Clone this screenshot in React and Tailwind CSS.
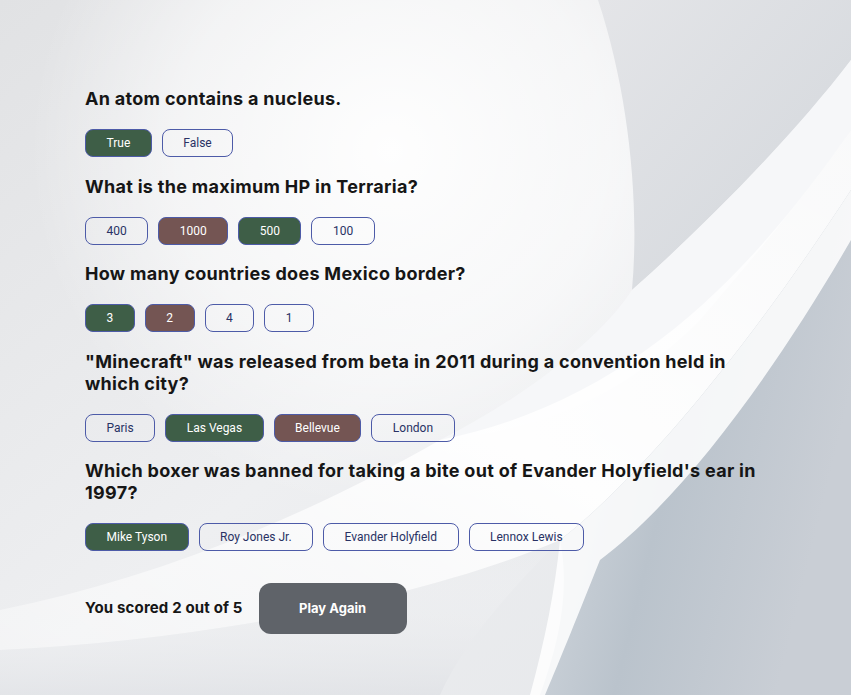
import React from 'react';

const QUESTIONS = [
  {
    q: 'An atom contains a nucleus.',
    answers: [
      { text: 'True', state: 'correct' },
      { text: 'False' },
    ],
  },
  {
    q: 'What is the maximum HP in Terraria?',
    answers: [
      { text: '400' },
      { text: '1000', state: 'wrong' },
      { text: '500', state: 'correct' },
      { text: '100' },
    ],
  },
  {
    q: 'How many countries does Mexico border?',
    answers: [
      { text: '3', state: 'correct' },
      { text: '2', state: 'wrong' },
      { text: '4' },
      { text: '1' },
    ],
  },
  {
    q: '"Minecraft" was released from beta in 2011 during a convention held in which city?',
    answers: [
      { text: 'Paris' },
      { text: 'Las Vegas', state: 'correct' },
      { text: 'Bellevue', state: 'wrong' },
      { text: 'London' },
    ],
  },
  {
    q: "Which boxer was banned for taking a bite out of Evander Holyfield's ear in 1997?",
    answers: [
      { text: 'Mike Tyson', state: 'correct' },
      { text: 'Roy Jones Jr.' },
      { text: 'Evander Holyfield' },
      { text: 'Lennox Lewis' },
    ],
  },
];

function Backdrop() {
  return (
    <svg className="absolute inset-0 h-full w-full" viewBox="0 0 851 695" preserveAspectRatio="none">
      <defs>
        <linearGradient id="base" x1="0" y1="0" x2="1" y2="1">
          <stop offset="0" stopColor="#e1e2e4" />
          <stop offset="0.5" stopColor="#eeeff1" />
          <stop offset="1" stopColor="#e4e6e9" />
        </linearGradient>
        <radialGradient id="glow" cx="390" cy="150" r="360" gradientUnits="userSpaceOnUse">
          <stop offset="0" stopColor="#ffffff" stopOpacity="0.95" />
          <stop offset="0.6" stopColor="#ffffff" stopOpacity="0.55" />
          <stop offset="1" stopColor="#ffffff" stopOpacity="0" />
        </radialGradient>
        <linearGradient id="topRight" x1="0" y1="0" x2="1" y2="1">
          <stop offset="0" stopColor="#e4e5e8" />
          <stop offset="1" stopColor="#d2d6db" />
        </linearGradient>
        <linearGradient id="streak" x1="0" y1="1" x2="1" y2="0">
          <stop offset="0" stopColor="#ffffff" stopOpacity="0.35" />
          <stop offset="0.5" stopColor="#ffffff" stopOpacity="0.95" />
          <stop offset="1" stopColor="#ffffff" stopOpacity="0.7" />
        </linearGradient>
        <linearGradient id="bottomRight" x1="0" y1="0" x2="1" y2="0.4">
          <stop offset="0" stopColor="#dde1e6" />
          <stop offset="0.55" stopColor="#bac3cc" />
          <stop offset="1" stopColor="#c9ced5" />
        </linearGradient>
        <linearGradient id="bottomLeft" x1="0" y1="0" x2="0" y2="1">
          <stop offset="0" stopColor="#ffffff" stopOpacity="0" />
          <stop offset="1" stopColor="#dfe1e5" stopOpacity="0.7" />
        </linearGradient>
      </defs>
      <rect width="851" height="695" fill="url(#base)" />
      <circle cx="390" cy="150" r="360" fill="url(#glow)" />
      <path d="M598 0 C628 90 640 200 632 290 C700 230 790 140 851 60 L851 0 Z" fill="url(#topRight)" />
      <path d="M632 290 C600 340 520 400 440 440 C560 430 640 380 700 320 C760 250 810 190 851 130 L851 60 C790 140 700 230 632 290 Z" fill="#f6f7f9" />
      <path d="M440 440 C300 520 150 580 0 610 L0 650 C200 640 420 600 560 540 C650 500 720 430 790 330 L851 190 L851 130 C760 260 640 400 440 440 Z" fill="url(#streak)" />
      <path d="M0 650 C200 640 420 600 560 540 C500 600 460 650 440 695 L0 695 Z" fill="url(#bottomLeft)" />
      <path d="M560 540 C650 470 760 330 851 190 L851 695 L540 695 C560 640 570 590 560 540 Z" fill="url(#bottomRight)" />
      <path d="M560 540 C650 470 760 330 851 190 L851 240 C770 380 680 500 600 560 C580 610 560 660 545 695 L530 695 C545 640 555 590 560 540 Z" fill="#ffffff" opacity="0.85" />
    </svg>
  );
}

function Answer({ text, state }) {
  const look =
    state === 'correct'
      ? 'bg-[#3e5e47] text-white'
      : state === 'wrong'
      ? 'bg-[#745553] text-white'
      : 'bg-transparent text-[#293264]';
  return (
    <button
      className={`h-[28px] rounded-[8px] border border-[#4d5ba8] px-[20.5px] text-[12px] ${look}`}
      style={{ fontFamily: 'Roboto, "Noto Sans", sans-serif' }}
    >
      {text}
    </button>
  );
}

export default function App() {
  return (
    <div className="relative min-h-[695px] w-full overflow-hidden">
      <Backdrop />
      <main
        className="relative mx-auto w-[681px] pt-[88px] text-[#161616]"
        style={{ fontFamily: 'Inter, "Liberation Sans", sans-serif' }}
      >
        {QUESTIONS.map((item) => (
          <section key={item.q} className="mb-[18.5px]">
            <h2 className="mb-[19px] text-[18px] font-bold leading-[22px] tracking-[0.3px]">{item.q}</h2>
            <div className="flex gap-[10px]">
              {item.answers.map((a) => (
                <Answer key={a.text} {...a} />
              ))}
            </div>
          </section>
        ))}
        <div className="mt-[32px] flex items-center gap-[16px]">
          <p className="text-[15px] font-bold tracking-[0.15px]">You scored 2 out of 5</p>
          <button className="h-[51px] w-[148px] rounded-[12px] bg-[#5f6369] text-[13px] font-bold text-white">
            Play Again
          </button>
        </div>
      </main>
    </div>
  );
}
